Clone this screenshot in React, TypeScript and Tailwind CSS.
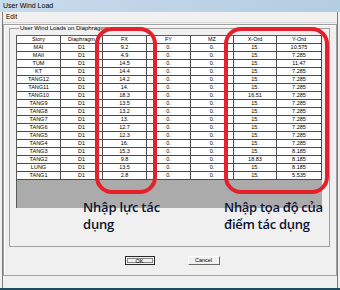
import React from "react";

type Row = { story: string; fx: string; x: string; y: string };

const rows: Row[] = [
  { story: "MAI", fx: "9.2", x: "15.", y: "10.575" },
  { story: "MAII", fx: "4.9", x: "15.", y: "7.285" },
  { story: "TUM", fx: "14.5", x: "15.", y: "11.47" },
  { story: "KT", fx: "14.4", x: "15.", y: "7.285" },
  { story: "TANG12", fx: "14.2", x: "15.", y: "7.285" },
  { story: "TANG11", fx: "14.", x: "15.", y: "7.285" },
  { story: "TANG10", fx: "18.3", x: "16.51", y: "7.285" },
  { story: "TANG9", fx: "13.5", x: "15.", y: "7.285" },
  { story: "TANG8", fx: "13.2", x: "15.", y: "7.285" },
  { story: "TANG7", fx: "13.", x: "15.", y: "7.285" },
  { story: "TANG6", fx: "12.7", x: "15.", y: "7.285" },
  { story: "TANG5", fx: "12.3", x: "15.", y: "7.285" },
  { story: "TANG4", fx: "16.", x: "15.", y: "7.285" },
  { story: "TANG3", fx: "15.3", x: "15.", y: "8.185" },
  { story: "TANG2", fx: "9.8", x: "18.83", y: "8.185" },
  { story: "LUNG", fx: "13.5", x: "15.", y: "8.185" },
  { story: "TANG1", fx: "2.8", x: "15.", y: "5.535" },
];

const cols = ["w-[44px]", "w-[42px]", "w-[44px]", "w-[44px]", "w-[43px]", "w-[43px]", "w-[45px]"];

function GridRow({ cells }: { cells: string[] }) {
  return (
    <div className="flex h-[8px] bg-white">
      {cells.map((c, i) => (
        <div
          key={i}
          className={`${cols[i]} shrink-0 border-r border-b border-[#4a4a4a] text-center text-[5.5px] leading-[7px] text-black overflow-hidden whitespace-nowrap`}
        >
          {c}
        </div>
      ))}
    </div>
  );
}

export default function App() {
  return (
    <div className="relative w-[340px] h-[290px] bg-[#f0f0f0] overflow-hidden font-['Liberation_Sans',Arial,sans-serif] flex flex-col">
      {/* title bar */}
      <div className="h-[12px] shrink-0 flex items-center pl-[3px] text-[7px] text-black bg-gradient-to-r from-[#c8dbeb] to-[#b3cde1]">
        User Wind Load
      </div>

      {/* window body */}
      <div className="ml-[2px] w-[336px] h-[276px] border-l border-r border-[#7c7c7c] flex flex-col">
        <div className="h-[11px] shrink-0 flex items-center pl-[3px] text-[6.5px] text-black border-b border-[#dadada]">
          Edit
        </div>

        <div className="mt-[1px] h-[252px] border border-[#a0a0a0] shadow-[inset_1px_1px_0_#fff] flex flex-col">
          <fieldset className="ml-[5px] w-[321px] h-[222px] border border-[#a0a0a0] pl-[6px] pt-[4px]">
            <legend className="ml-[3px] px-[1px] text-[6px] leading-[6px] text-black">
              User Wind Loads on Diaphragms
            </legend>
            <div className="w-[306px] h-[173px] border-l border-t border-[#5a5a5a] bg-[#ababab]">
              <GridRow cells={["Story", "Diaphragm", "FX", "FY", "MZ", "X-Ord", "Y-Ord"]} />
              {rows.map((r) => (
                <GridRow key={r.story} cells={[r.story, "D1", r.fx, "0.", "0.", r.x, r.y]} />
              ))}
            </div>
          </fieldset>

          <div className="mt-[9px] flex justify-center gap-[33px] pl-[4px]">
            <button className="w-[30px] h-[9px] border border-[#2a2a2a] bg-[#f0f0f0] flex items-center justify-center">
              <span className="w-[26px] h-[5px] border border-[#8a8a8a] text-[5.5px] leading-[4px] text-black text-center">
                OK
              </span>
            </button>
            <button className="w-[32px] h-[9px] border border-t-white border-l-white border-r-[#6a6a6a] border-b-[#6a6a6a] bg-[#f0f0f0] text-[5.5px] leading-[7px] text-black text-center">
              Cancel
            </button>
          </div>
        </div>
      </div>

      <div className="mt-auto h-[2px] bg-[#1b4f5c]" />

      {/* annotations */}
      <div className="absolute left-[95px] top-[27px] w-[62px] h-[167px] border-[4.5px] border-[#e5202a] rounded-[17px]" />
      <div className="absolute left-[224px] top-[27px] w-[105px] h-[167px] border-[4.5px] border-[#e5202a] rounded-[17px]" />

      <div className="absolute left-[83px] top-[199px] font-['Open_Sans',sans-serif] font-semibold text-[13px] leading-[17px] tracking-[-0.2px] text-[#0b1533]">
        Nhập lực tác
        <br />
        dụng
      </div>
      <div className="absolute left-[224px] top-[199px] font-['Open_Sans',sans-serif] font-semibold text-[13px] leading-[17px] tracking-[-0.3px] text-[#0b1533]">
        Nhập tọa độ của
        <br />
        điểm tác dụng
      </div>
    </div>
  );
}
